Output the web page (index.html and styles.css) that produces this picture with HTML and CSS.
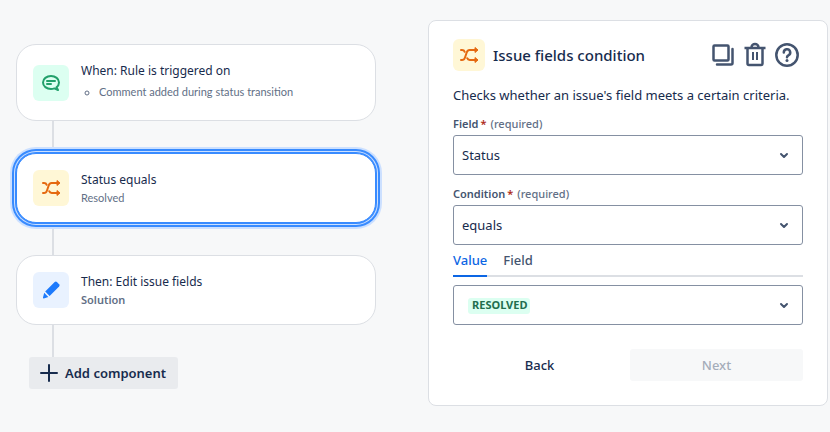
FILE: index.html
```html
<!DOCTYPE html>
<html lang="en">
<head>
  <meta charset="UTF-8">
  <meta name="viewport" content="width=device-width, initial-scale=1">
  <title>Automation rule</title>
  <link rel="stylesheet" href="styles.css">
</head>
<body>
  <svg width="0" height="0" class="sprite" aria-hidden="true">
    <symbol id="shuffle" viewBox="0 0 24 24">
      <g fill="none" stroke="currentColor" stroke-width="2" stroke-linecap="round" stroke-linejoin="round">
        <path d="M4 17h1c1.700 0 2.400-.8 3-2.500l1.700-5C10.300 7.800 11 7 12.500 7H18"/>
        <path d="M4 7h1c1.400 0 2.200.5 2.700 1.800"/>
        <path d="M10.200 15.200c.5 1.300 1.200 1.800 2.500 1.800H18"/>
      </g>
      <path fill="currentColor" stroke="currentColor" stroke-linejoin="round" d="M18 4.500 21 7l-3 2.500zM18 14.500l3 2.500-3 2.500z"/>
    </symbol>
    <symbol id="chevron" viewBox="0 0 24 24">
      <path fill="none" stroke="currentColor" stroke-width="2" stroke-linecap="round" stroke-linejoin="round" d="M9 11l3 3 3-3"/>
    </symbol>
  </svg>

  <main class="builder">
    <section class="rule">
      <div class="card">
        <span class="tile green">
          <svg viewBox="0 0 24 24" width="24" height="24" fill="none" stroke="currentColor" stroke-width="2" stroke-linecap="round" stroke-linejoin="round">
            <path d="M17.500 16.200c1.600-1.200 2.500-2.900 2.500-4.700C20 7.900 16.400 5 12 5s-8 2.900-8 6.500S7.600 18 12 18c1.200 0 2.400-.2 3.400-.6l3.600 1.600z"/>
            <path d="M8 10h8M8 13h4"/>
          </svg>
        </span>
        <div class="text">
          <div class="title">When: Rule is triggered on</div>
          <ul>
            <li>Comment added during status transition</li>
          </ul>
        </div>
      </div>
      <div class="line"></div>
      <div class="card selected">
        <span class="tile yellow"><svg width="24" height="24"><use href="#shuffle"/></svg></span>
        <div class="text">
          <div class="title">Status equals</div>
          <div class="sub">Resolved</div>
        </div>
      </div>
      <div class="line"></div>
      <div class="card">
        <span class="tile blue">
          <svg viewBox="0 0 24 24" width="24" height="24" fill="currentColor">
            <path d="M6.200 13.600 15.700 4.100a1.600 1.600 0 0 1 2.200 0l2.200 2.200a1.600 1.600 0 0 1 0 2.200L10.600 18z"/>
            <path d="M5.200 14.800l4.100 4.100-4.500 1.500c-.6.200-1-.2-.8-.8z"/>
          </svg>
        </span>
        <div class="text">
          <div class="title">Then: Edit issue fields</div>
          <div class="sub strong">Solution</div>
        </div>
      </div>
      <div class="line"></div>
      <button type="button" class="add">
        <svg viewBox="0 0 24 24" width="24" height="24" fill="none" stroke="currentColor" stroke-width="2" stroke-linecap="round"><path d="M12 4v16M4 12h16"/></svg>
        Add component
      </button>
    </section>

    <form class="panel">
      <header>
        <span class="tile small yellow"><svg width="24" height="24"><use href="#shuffle"/></svg></span>
        <h1>Issue fields condition</h1>
        <button type="button" class="icon" aria-label="Duplicate">
          <svg viewBox="0 0 32 32" width="32" height="32" fill="none" stroke="currentColor" stroke-width="2.500" stroke-linecap="round" stroke-linejoin="round">
            <rect x="6.500" y="6.500" width="15" height="15" rx="1"/>
            <path d="M25.500 10v14a1.500 1.500 0 0 1-1.500 1.500H10"/>
          </svg>
        </button>
        <button type="button" class="icon" aria-label="Delete">
          <svg viewBox="0 0 32 32" width="32" height="32" fill="none" stroke="currentColor" stroke-width="2.500" stroke-linejoin="round">
            <path d="M5.500 9h21M12.500 8.500V8a3.500 3 0 0 1 7 0v.5M8.500 9v15.500a1.500 1.500 0 0 0 1.500 1.500h12a1.500 1.500 0 0 0 1.500-1.500V9"/>
            <path stroke-width="2" d="M14 13v8M18 13v8"/>
          </svg>
        </button>
        <button type="button" class="icon" aria-label="Help">
          <svg viewBox="0 0 32 32" width="32" height="32" fill="none" stroke="currentColor" stroke-width="2.500" stroke-linecap="round">
            <circle cx="16" cy="16" r="10.700"/>
            <path d="M12.800 13.500a3.200 3.200 0 1 1 4.600 2.800c-.9.500-1.400 1-1.400 1.900"/>
            <circle cx="16" cy="21.500" r="1.500" fill="currentColor" stroke="none"/>
          </svg>
        </button>
      </header>
      <p>Checks whether an issue's field meets a certain criteria.</p>

      <label for="field">Field<span class="star">*</span><span class="req">(required)</span></label>
      <div class="select">
        <select id="field" required>
          <option>Status</option>
        </select>
        <svg width="24" height="24"><use href="#chevron"/></svg>
      </div>

      <label for="condition">Condition<span class="star">*</span><span class="req">(required)</span></label>
      <div class="select">
        <select id="condition" required>
          <option>equals</option>
        </select>
        <svg width="24" height="24"><use href="#chevron"/></svg>
      </div>

      <div class="tabs" role="tablist">
        <button type="button" role="tab" aria-selected="true">Value</button>
        <button type="button" role="tab" aria-selected="false">Field</button>
      </div>

      <div class="select lozenge">
        <select aria-label="Value">
          <option>RESOLVED</option>
        </select>
        <svg width="24" height="24"><use href="#chevron"/></svg>
      </div>

      <footer>
        <button type="button">Back</button>
        <button type="submit" disabled>Next</button>
      </footer>
    </form>
  </main>
</body>
</html>
```
FILE: styles.css
```css
* {
  box-sizing: border-box;
}
body {
  margin: 0;
  background: #f7f8f9;
  color: #172b4d;
  font-family: "Noto Sans", sans-serif;
  font-size: 13px;
  line-height: 20px;
}
button, select {
  font: inherit;
  color: inherit;
}
button {
  border: none;
  padding: 0;
  background: none;
  cursor: pointer;
}
svg {
  display: block;
  flex: none;
}
.sprite {
  position: absolute;
}
.builder {
  display: grid;
  grid-template-columns: 9fr 10fr;
  gap: 52px;
  align-items: start;
  padding: 20px 2px 20px 16px;
}

/* rule chain */
.rule {
  padding-top: 24px;
}
.card {
  display: flex;
  align-items: center;
  gap: 12px;
  padding: 16px;
  background: #fff;
  border: 1px solid #dcdfe4;
  border-radius: 20px;
}
.card.selected {
  position: relative;
  border-color: #388bff;
  box-shadow: 0 0 0 1px #388bff, 0 0 0 2px #cce0ff, 0 0 0 4px #388bff, 0 0 0 6px #cce0ff;
}
.tile {
  display: flex;
  flex: none;
  align-items: center;
  justify-content: center;
  width: 36px;
  height: 36px;
  border-radius: 6px;
}
.tile.small {
  width: 32px;
  height: 32px;
}
.green {
  background: #dcfff1;
  color: #22a06b;
}
.yellow {
  background: #fff7d6;
  color: #e56910;
}
.blue {
  background: #e9f2ff;
  color: #1d7afc;
}
.title {
  font-size: 12px;
}
.sub, .card ul {
  color: #626f86;
  font-family: Lato, "Noto Sans", sans-serif;
  font-size: 11px;
  line-height: 16px;
}
.sub.strong {
  font-family: inherit;
  font-weight: 600;
}
.card ul {
  margin: 3px 0 4px;
  padding-left: 18px;
  list-style: circle;
}
.line {
  width: 2px;
  height: 32px;
  margin-left: 36px;
  background: #dcdfe4;
}
.add {
  display: flex;
  align-items: center;
  gap: 4px;
  height: 32px;
  margin-left: 13px;
  padding: 0 12px 0 8px;
  border-radius: 3px;
  background: #e9ebee;
  font-weight: 600;
}

/* settings panel */
.panel {
  padding: 18px 24px 24px;
  background: #fff;
  border: 1px solid #dcdfe4;
  border-radius: 8px;
}
.panel header {
  display: flex;
  align-items: center;
}
h1 {
  flex: 1;
  margin: 0 0 0 8px;
  font-size: 15px;
  font-weight: 500;
}
.icon {
  color: #44546f;
}
.panel p {
  margin: 14px 0 10px;
}
label {
  display: flex;
  align-items: center;
  height: 20px;
  padding-bottom: 2px;
  color: #44546f;
  font-size: 11px;
  font-weight: 600;
}
.star {
  margin: 0 4px 0 2px;
  color: #ae2a19;
}
.req {
  color: #626f86;
  font-weight: 500;
}
.select {
  position: relative;
}
.select + label {
  margin-top: 10px;
}
.select select {
  display: block;
  width: 100%;
  height: 40px;
  padding: 0 32px 0 8px;
  border: 1px solid #8590a2;
  border-radius: 3px;
  background: transparent;
  appearance: none;
}
.select svg {
  position: absolute;
  top: 8px;
  right: 7px;
  color: #44546f;
  pointer-events: none;
}
.lozenge::before {
  content: "";
  position: absolute;
  top: 13px;
  left: 15px;
  width: 62px;
  height: 16px;
  border-radius: 3px;
  background: #dcfff1;
}
.lozenge select {
  position: relative;
  padding-left: 18px;
  color: #216e4e;
  font-size: 11px;
  font-weight: 700;
}
.tabs {
  display: flex;
  gap: 16px;
  margin-bottom: 8px;
  border-bottom: 2px solid #dcdfe4;
}
.tabs button {
  height: 32px;
  margin-bottom: -2px;
  border-bottom: 2px solid transparent;
  color: #44546f;
  font-weight: 500;
}
.tabs button[aria-selected="true"] {
  border-color: #0c66e4;
  color: #0c66e4;
}
footer {
  display: grid;
  grid-template-columns: 1fr 1fr;
  gap: 4px;
  margin-top: 24px;
}
footer button {
  height: 32px;
  border-radius: 3px;
  font-weight: 500;
}
footer button:disabled {
  background: #f7f8f9;
  color: #a5adba;
  cursor: not-allowed;
}
```
